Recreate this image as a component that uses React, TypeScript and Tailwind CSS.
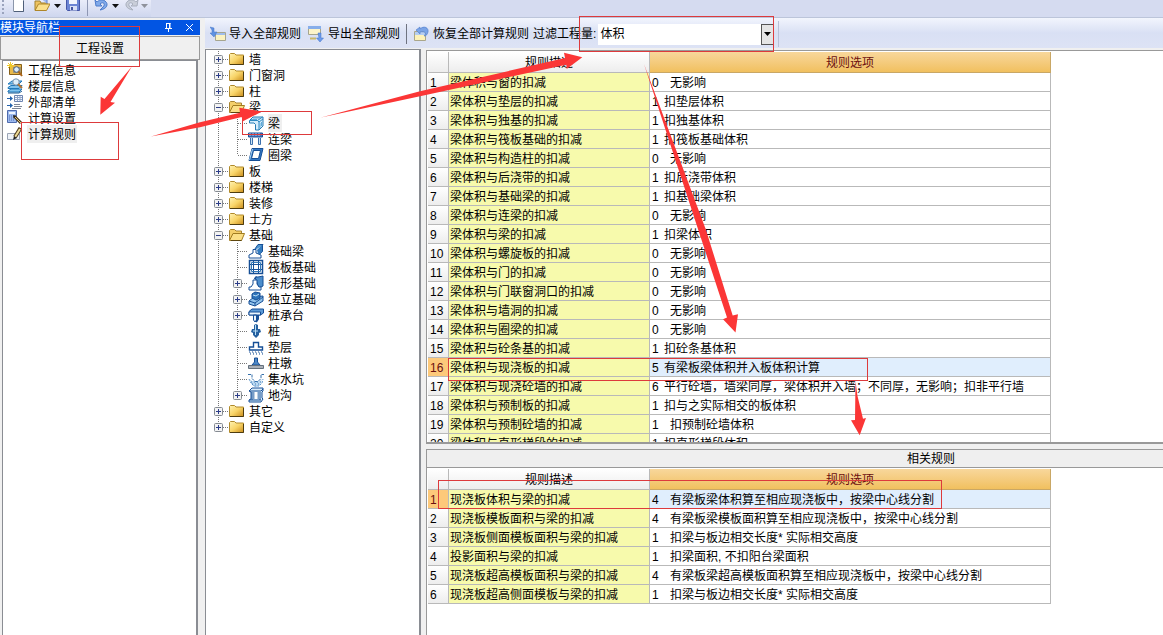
import React from "react";

type Rule = [string, string, string, boolean];

// [description, option code, option text, wide gap after the code]
const rules: Rule[] = [
  ["梁体积与窗的扣减", "0", "无影响", true],
  ["梁体积与垫层的扣减", "1", "扣垫层体积", false],
  ["梁体积与独基的扣减", "1", "扣独基体积", false],
  ["梁体积与筏板基础的扣减", "1", "扣筏板基础体积", false],
  ["梁体积与构造柱的扣减", "0", "无影响", true],
  ["梁体积与后浇带的扣减", "1", "扣后浇带体积", false],
  ["梁体积与基础梁的扣减", "1", "扣基础梁体积", false],
  ["梁体积与连梁的扣减", "0", "无影响", true],
  ["梁体积与梁的扣减", "1", "扣梁体积", false],
  ["梁体积与螺旋板的扣减", "0", "无影响", true],
  ["梁体积与门的扣减", "0", "无影响", true],
  ["梁体积与门联窗洞口的扣减", "0", "无影响", true],
  ["梁体积与墙洞的扣减", "0", "无影响", true],
  ["梁体积与圈梁的扣减", "0", "无影响", true],
  ["梁体积与砼条基的扣减", "1", "扣砼条基体积", false],
  ["梁体积与现浇板的扣减", "5", "有梁板梁体积并入板体积计算", false],
  ["梁体积与现浇砼墙的扣减", "6", "平行砼墙，墙梁同厚，梁体积并入墙；不同厚，无影响；扣非平行墙", false],
  ["梁体积与预制板的扣减", "1", "扣与之实际相交的板体积", false],
  ["梁体积与预制砼墙的扣减", "1", "扣预制砼墙体积", true],
  ["梁体积与直形梯段的扣减", "1", "扣直形梯段体积", false],
];

const related: Rule[] = [
  ["现浇板体积与梁的扣减", "4", "有梁板梁体积算至相应现浇板中，按梁中心线分割", true],
  ["现浇板模板面积与梁的扣减", "4", "有梁板梁模板面积算至相应现浇板中，按梁中心线分割", true],
  ["现浇板侧面模板面积与梁的扣减", "1", "扣梁与板边相交长度* 实际相交高度", true],
  ["投影面积与梁的扣减", "1", "扣梁面积, 不扣阳台梁面积", true],
  ["现浇板超高模板面积与梁的扣减", "4", "有梁板梁超高模板面积算至相应现浇板中，按梁中心线分割", true],
  ["现浇板超高侧面模板与梁的扣减", "1", "扣梁与板边相交长度* 实际相交高度", true],
];

function RuleTable({ rows, selected, label }: { rows: Rule[]; selected: number; label: string }) {
  return (
    <table aria-label={label} className="w-[623px] table-fixed border-separate border-spacing-0 text-left">
      <colgroup>
        <col className="w-[21px]" />
        <col className="w-[201px]" />
        <col className="w-[401px]" />
      </colgroup>
      <thead>
        <tr className="h-[21px]">
          <th className="border-r border-b border-[#b9b9b9] bg-linear-to-b from-white to-[#ededed] p-0" />
          <th className="border-r border-b border-[#b9b9b9] bg-linear-to-b from-white to-[#ededed] p-0 pt-0.5 text-center font-normal">规则描述</th>
          <th className="border-r border-b border-[#c9a765] bg-linear-to-b from-[#f8d79b] to-[#f1c05e] p-0 pt-0.5 text-center font-normal text-[#6b0f0f]">规则选项</th>
        </tr>
      </thead>
      <tbody>
        {rows.map(([desc, code, text, wide], i) => {
          const on = i + 1 === selected;
          return (
            <tr key={desc} className="h-[19px] whitespace-nowrap">
              <td
                className={
                  on
                    ? "border-r border-b border-[#b9b9b9] bg-[#fdc97a] p-0 pt-0.5 pl-0.5 text-[#6b0f0f]"
                    : "border-r border-b border-[#b9b9b9] bg-linear-to-b from-white to-[#ededed] p-0 pt-0.5 pl-0.5"
                }
              >
                {i + 1}
              </td>
              <td className="border-r border-b border-[#b9b9b9] bg-[#f7faac] p-0 pt-0.5 pl-px">{desc}</td>
              <td
                className={
                  on
                    ? "border-r border-b border-[#b9b9b9] bg-[#e0eefd] p-0 pt-0.5 pl-0.5"
                    : "border-r border-b border-[#b9b9b9] bg-white p-0 pt-0.5 pl-0.5"
                }
              >
                <div className="flex">
                  <span className={wide ? "w-[18px]" : "w-3"}>{code}</span>
                  <span>{text}</span>
                </div>
              </td>
            </tr>
          );
        })}
      </tbody>
    </table>
  );
}

function Svg({ children }: { children: React.ReactNode }) {
  return (
    <svg viewBox="0 0 16 16" className="size-4 shrink-0" aria-hidden="true">
      {children}
    </svg>
  );
}

const Folder = () => (
  <Svg>
    <defs>
      <linearGradient id="fold" x1="0" y1="0" x2="1" y2="1">
        <stop offset="0" stopColor="#fff3b4" />
        <stop offset="0.5" stopColor="#f8d468" />
        <stop offset="1" stopColor="#c98c1c" />
      </linearGradient>
    </defs>
    <path d="M.5 13.5V3.5l1-1h4l1.5 1.5h7.5v9.5z" fill="url(#fold)" stroke="#b08a2c" />
    <path d="M1 13.5h13.5V5" fill="none" stroke="#4d3c10" />
  </Svg>
);

const OpenFolder = () => (
  <Svg>
    <path d="M.5 13V3.5l1-1h4L7 4h5.500v3" fill="#f4cf6a" stroke="#a88431" />
    <path d="M.5 13.500L4 6.500h11.500L12.500 13.500z" fill="#fbdf86" stroke="#a17c20" />
    <path d="M2 13.500h10.500" stroke="#5d460e" />
  </Svg>
);

const B = "#164f96";
const L = "#a9d3f3";

const icons: Record<string, React.ReactNode> = {
  beam: (
    <Svg>
      <path d="M1.500 5.500L5 2h10v9l-4 4H7.500V9.500L6 8H1.500z" fill="#d4ecfb" stroke="#247cb5" />
      <path d="M2 5.500h7.500L14.500 2M11 15V7l-1.500-1.500M11 7l4-3" fill="none" stroke="#2e89c0" />
      <path d="M3 4.500h6M5 3h7M12 8v5M13.500 7v4" stroke="#5fabda" />
    </Svg>
  ),
  link: (
    <Svg>
      <path d="M.5 2h14v4H.5z" fill="#5275bd" stroke={B} />
      <path d="M2.500 7v6.500h2V7M10.500 7v6.500h2V7M1 4h13" fill="#c8e4f8" stroke="#3c70ad" />
      <path d="M2 2v3M5 2v3M8 2v3M11 2v3" stroke="#a9c9ef" />
    </Svg>
  ),
  ring: (
    <Svg>
      <path d="M4 1.500h11l-3 12H1z" fill="#3177c5" stroke={B} />
      <path d="M5.500 3.500h7l-2 8h-7z" fill="#fff" stroke={B} />
      <path d="M1.500 13L4.500 2" stroke={L} />
    </Svg>
  ),
  fbeam: (
    <Svg>
      <path d="M5.500 8L10 1.500h5L10.500 8v4l4-3.500v-6" fill="#4d94d0" stroke={B} />
      <path d="M1 15v-3l4-2V6.500h3V10l5 2v3z" fill="#fff" stroke={B} />
      <path d="M9 7l5-5v7l-4 2z" fill="#347cc0" />
    </Svg>
  ),
  raft: (
    <Svg>
      <path d="M1.500 1.500h13v13h-13z" fill="#fff" stroke={B} strokeWidth="1.500" />
      <path d="M5.500 1v14M10.500 1v14M1 5.500h14M1 10.500h14" stroke={B} />
      <path d="M3.500 3.500h9v9h-9z" fill="none" stroke="#3278b6" />
    </Svg>
  ),
  strip: (
    <Svg>
      <path d="M7 2h3l5-1v10l-4 2L9 8z" fill="#4b8dcc" stroke={B} />
      <path d="M1 15v-3h2l2-3V5h4v4l2 3h2v3z" fill="#fff" stroke={B} />
      <path d="M6 4l3-2.500" stroke={B} />
    </Svg>
  ),
  pad: (
    <Svg>
      <path d="M1 10l5-4 9-1v5l-8 5-6-2z" fill="#92c3eb" stroke={B} />
      <path d="M1 10l6 2 8-6M7 12v3" fill="none" stroke={B} />
      <path d="M4 3l3-2 5 1v5L8 9 4 7z" fill="#2e73b9" stroke={B} />
      <path d="M5 4l3 1 3-2" fill="none" stroke="#bfe0f7" />
    </Svg>
  ),
  cap: (
    <Svg>
      <path d="M1 4.500L4 2h11.500v4l-3 2H1z" fill="#5c9bd6" stroke={B} />
      <path d="M1 5h11.500v3H1zM5.500 8h3v5L7 15l-1.500-2z" fill="#eaf6fe" stroke={B} />
      <path d="M10 8v4l-2 3" fill="none" stroke={B} strokeWidth="2" />
    </Svg>
  ),
  pile: (
    <Svg>
      <path d="M6 2l2-1 2 1v4h2l1 3-2 1v2l-3 3-3-3v-2l-2-1 1-3h2z" fill="#235f9f" />
      <path d="M7.500 2v10M5 8h5" stroke="#b9def5" />
    </Svg>
  ),
  cushion: (
    <Svg>
      <path d="M5.500 3.500h5V8h4v3h-13V8h4z" fill="#fff" stroke={B} strokeWidth="1.400" />
      <path d="M1 13h14M2 15h13" stroke={B} strokeDasharray="1 2" />
      <path d="M2 14h13" stroke="#5580ae" strokeDasharray="1 2" />
    </Svg>
  ),
  pier: (
    <Svg>
      <path d="M6.500 3h3v4l2.500 3H4l2.500-3z" fill="#4d87c6" stroke={B} />
      <path d="M.5 10.500h15v3H.5z" fill="#aab0b8" stroke="#65717d" />
    </Svg>
  ),
  sump: (
    <Svg>
      <path d="M2 8l2 2h8l2-2-2 6-4 2-4-2z" fill="#bcd9f1" />
      <path d="M0 3.500h4v4l3 3h3l3-3v-4h3" fill="none" stroke="#336fab" strokeDasharray="3 1" />
      <path d="M1 8l2 4 3 3h5l3-3 1-4" fill="none" stroke="#5b95cb" strokeDasharray="2 1" />
      <path d="M3 11h11M4 13h9" stroke="#4780b8" strokeDasharray="1 2" />
    </Svg>
  ),
  trench: (
    <Svg>
      <path d="M1 4l3-3h11v3l-1 1v6l1 1-2 3H1v-2l2-1V5z" fill="#d7ebf9" stroke={B} />
      <path d="M1 4h12l2-2M4 5v8M6 5v7M10 5v7M12 5v8M1 13h12" fill="none" stroke={B} />
      <path d="M6.500 5h3v7h-3z" fill="#fff" />
    </Svg>
  ),
};

function Branch({ box, line, last }: { box?: "+" | "-"; line?: boolean; last?: boolean }) {
  return (
    <svg viewBox="0 0 19 16" className="h-4 w-[19px] shrink-0" aria-hidden="true">
      <path d={last ? "M9.500 0v8" : "M9.500 0v16"} stroke="#777" strokeDasharray="1 1" />
      {!line && <path d="M10 8.500h9" stroke="#777" strokeDasharray="1 1" />}
      {box && (
        <>
          <rect x="5.500" y="4.500" width="8" height="8" rx="1" fill="#f3f3f3" stroke="#858b92" />
          <path d={box === "+" ? "M7 8.500h5M9.500 6v5" : "M7 8.500h5"} stroke="#2b3c88" />
        </>
      )}
    </svg>
  );
}

type Node = { t: string; box?: "+" | "-"; icon?: string; last?: boolean; on?: boolean };
const nodes: Node[] = [
  { t: "墙", box: "+" },
  { t: "门窗洞", box: "+" },
  { t: "柱", box: "+" },
  { t: "梁", box: "-" },
  { t: "梁", icon: "beam", on: true },
  { t: "连梁", icon: "link" },
  { t: "圈梁", icon: "ring", last: true },
  { t: "板", box: "+" },
  { t: "楼梯", box: "+" },
  { t: "装修", box: "+" },
  { t: "土方", box: "+" },
  { t: "基础", box: "-" },
  { t: "基础梁", icon: "fbeam" },
  { t: "筏板基础", icon: "raft" },
  { t: "条形基础", icon: "strip", box: "+" },
  { t: "独立基础", icon: "pad", box: "+" },
  { t: "桩承台", icon: "cap", box: "+" },
  { t: "桩", icon: "pile" },
  { t: "垫层", icon: "cushion" },
  { t: "柱墩", icon: "pier" },
  { t: "集水坑", icon: "sump" },
  { t: "地沟", icon: "trench", box: "+", last: true },
  { t: "其它", box: "+" },
  { t: "自定义", box: "+", last: true },
];

function Tree() {
  return (
    <ul className="w-[216px] shrink-0 overflow-hidden border-t border-r-2 border-l border-[#8a8d93] bg-white pt-px pl-[3px]">
      {nodes.map((n, i) => (
        <li key={i} className="flex h-4 items-center">
          {n.icon ? (
            <>
              <Branch line />
              <Branch box={n.box} last={n.last} />
            </>
          ) : (
            <Branch box={n.box} last={n.last} />
          )}
          <button type="button" className="flex h-4 items-center gap-1 pl-px">
            {n.icon ? icons[n.icon] : n.box === "-" ? <OpenFolder /> : <Folder />}
            <span className={n.on ? "bg-[#efefef] pt-0.5 pr-0.5" : "pt-0.5 pr-0.5"}>{n.t}</span>
          </button>
        </li>
      ))}
    </ul>
  );
}

const Caret = ({ gray }: { gray?: boolean }) => (
  <svg viewBox="0 0 7 4" className="mt-[3px] h-1 w-[7px] shrink-0" aria-hidden="true">
    <path d="M0 0h7L3.500 4z" fill={gray ? "#8f929b" : "#111"} />
  </svg>
);

function TopBar() {
  return (
    <header className="flex h-[18px] shrink-0 overflow-hidden border-b border-[#bcc5da] bg-[#d5dbf0]">
      <div className="flex w-[151px] items-start bg-linear-to-b from-[#e9ecf9] to-[#ced6ee] pl-0.5">
        <svg viewBox="0 0 3 16" className="h-4 w-[3px]" aria-hidden="true">
          <path d="M1 0v16" stroke="#9aa3bd" strokeWidth="2" strokeDasharray="2 2" />
        </svg>
        <button type="button" aria-label="新建" className="-mt-1 ml-[5px]">
          <Svg>
            <path d="M3.500.5h7l3 3v12h-10z" fill="#fff" stroke="#8b96aa" />
            <path d="M4 15.500h9.500V5" fill="none" stroke="#4f5f79" />
          </Svg>
        </button>
        <button type="button" aria-label="打开" className="-mt-1 ml-2 flex items-center">
          <Svg>
            <path d="M1 14V5h5l1 2h6v3" fill="#eec361" stroke="#a1822f" />
            <path d="M9 4l4-3v7" fill="#9fbaf0" stroke="#6482ca" />
            <path d="M1 14.500L4.500 8H16l-3.500 6.500z" fill="#fbe08b" stroke="#af8629" />
          </Svg>
          <span className="ml-1"><Caret /></span>
        </button>
        <button type="button" aria-label="保存" className="-mt-1 ml-1">
          <Svg>
            <path d="M1.500 1.500h13v13h-12l-1-1z" fill="#6c85d4" stroke="#4556a8" />
            <path d="M4 1.500h8V8H4z" fill="#f2f5fe" />
            <path d="M5 10h7v4.500H5z" fill="#d9e0f6" />
            <path d="M6 11h2v3H6z" fill="#43539f" />
          </Svg>
        </button>
        <span className="ml-[6px] h-4 w-px bg-[#8e97b3]" />
        <button type="button" aria-label="撤销" className="-mt-1 ml-1.5 flex items-center">
          <Svg>
            <path d="M1 4l1 6h6L6 8c3-3 6 0 3 3l-3 3c7-1 9-6 5-9-3-2-6-1-8 1z" fill="#80a9e9" stroke="#4c7bcb" />
          </Svg>
          <span className="ml-0.5"><Caret /></span>
        </button>
        <button type="button" aria-label="重做" className="-mt-1 ml-1 flex items-center">
          <Svg>
            <path d="M15 4l-1 6H8l2-2c-3-3-6 0-3 3l3 3C3 13 1 8 5 5c3-2 6-1 8 1z" fill="#c9ced9" stroke="#a8afbd" />
          </Svg>
          <span className="ml-0.5"><Caret gray /></span>
        </button>
      </div>
    </header>
  );
}

const navItems: { t: string; icon: React.ReactNode; on?: boolean }[] = [
  {
    t: "工程信息",
    icon: (
      <Svg>
        <path d="M2.500 3.500h4l1-1h7v10h-12z" fill="#e9b94a" stroke="#87601a" />
        <path d="M6 5h8v6H6z" fill="#a59670" />
        <circle cx="9.500" cy="7.500" r="2.800" fill="#dcecf8" stroke="#4b5f79" />
        <path d="M11.500 9.500L15 14" stroke="#ad6419" strokeWidth="2" />
        <path d="M3.500 0v7M0 3.500h7M1 1l5 5M6 1L1 6" stroke="#efc929" />
      </Svg>
    ),
  },
  {
    t: "楼层信息",
    icon: (
      <Svg>
        <path d="M1 6l4-3h10l-3 3zM1 9.500l3-2h11l-3 3H1zM1 13l3-2h11l-3 3H1z" fill="#7fc2ee" stroke="#2178b9" />
        <path d="M1 15h11l3-2" fill="none" stroke="#155894" />
        <circle cx="9" cy="4" r="3.200" fill="#dceefb" stroke="#7e95ad" />
        <path d="M11 6l4 4" stroke="#ad733a" strokeWidth="2" />
      </Svg>
    ),
  },
  {
    t: "外部清单",
    icon: (
      <Svg>
        <path d="M7.500 1.500h8v6h-8z" fill="#f5f9ff" stroke="#6e85b1" />
        <path d="M8 3.500h7M8 5.500h7M10.500 2v5M13 2v5" stroke="#8fa4c8" />
        <path d="M0 4.500h5M0 11.500h5" stroke="#2362ac" />
        <path d="M3 2l3 2.500L3 7zM3 9l3 2.500L3 14z" fill="#2362ac" />
        <path d="M7 10.500h6M7 12.500h8M5 14.500h9" stroke="#7e8797" />
      </Svg>
    ),
  },
  {
    t: "计算设置",
    icon: (
      <Svg>
        <path d="M.5.500h9v12h-9z" fill="#9cb9ed" stroke="#4e6bae" />
        <path d="M2 2h6v2H2z" fill="#edf4ff" />
        <path d="M2 6h6M2 8h6M2 10h6" stroke="#506eb7" strokeDasharray="1 1" />
        <path d="M7 6l7 7" stroke="#4b3b22" strokeWidth="3" />
        <path d="M8 7l6 6" stroke="#e8c978" />
        <path d="M6 5l1 3 2-2z" fill="#222" />
      </Svg>
    ),
  },
  {
    t: "计算规则",
    on: true,
    icon: (
      <Svg>
        <path d="M.5 7.500h12v6H.5z" fill="#eef2f8" stroke="#9aa4b5" />
        <path d="M13.500 2L8 11" stroke="#4a371a" strokeWidth="4" />
        <path d="M13 3L8 11" stroke="#eedb97" strokeWidth="2" />
        <path d="M6 14l1-4 3 2z" fill="#222" />
      </Svg>
    ),
  },
];

function NavPanel() {
  return (
    <aside className="flex w-[200px] shrink-0 flex-col pt-0.5">
      <div className="flex h-[15px] items-center bg-[#0255e3] pr-1.5 text-white">
        <h2 className="flex-1 leading-4">模块导航栏</h2>
        <button type="button" aria-label="固定" className="mr-3">
          <svg viewBox="0 0 9 9" className="size-[9px]" aria-hidden="true">
            <path d="M2.500 0v5M6 0v5M2 .5h4.500M1 5.500h7M4.500 6v3M5.500 0v5" fill="none" stroke="#fff" />
          </svg>
        </button>
        <button type="button" aria-label="关闭">
          <svg viewBox="0 0 9 9" className="size-[9px]" aria-hidden="true">
            <path d="M1 1l7 7M8 1L1 8" stroke="#fff" />
          </svg>
        </button>
      </div>
      <button type="button" className="mt-px h-6 border border-[#999] bg-[#f0f0f0] pt-0.5 text-center">
        工程设置
      </button>
      <ul className="mr-0.5 ml-0.5 flex-1 border-t border-r-2 border-l border-[#8a8d93] bg-white pt-px pl-1">
        {navItems.map((n) => (
          <li key={n.t}>
            <button type="button" className="flex h-4 items-center gap-1">
              {n.icon}
              <span className={n.on ? "bg-[#efefef] px-px pt-0.5" : "px-px pt-0.5"}>{n.t}</span>
            </button>
          </li>
        ))}
      </ul>
    </aside>
  );
}

function Toolbar() {
  return (
    <div className="flex h-[30px] shrink-0 items-center overflow-hidden bg-linear-to-b from-[#f2f5fd] via-[#d9e0f4] to-[#dde3f5] pt-0.5 pl-[5px] whitespace-nowrap">
      <button type="button" className="flex items-center gap-[3px]">
        <Svg>
          <path d="M5.500 6.500h10v8h-10z" fill="#fbf2c0" stroke="#a6a58e" />
          <path d="M6 7h9v2H6z" fill="#9fbdec" />
          <path d="M0 1l4 1v4h3L4 11 0 7h2V4z" fill="#5f92e2" stroke="#4676c8" strokeWidth=".5" />
        </Svg>
        导入全部规则
      </button>
      <button type="button" className="ml-[7px] flex items-center gap-1">
        <Svg>
          <path d="M.5.500h12v8H.500z" fill="#fdf4c9" stroke="#a6a58e" />
          <path d="M0 0h13v3H0z" fill="#87aeea" />
          <path d="M2 12.500h6" stroke="#c9b76b" strokeWidth="2" />
          <path d="M10 7h3v5h2.500L12 16 8.500 12H11z" fill="#6e9bea" stroke="#3f72c9" strokeWidth=".5" />
        </Svg>
        导出全部规则
      </button>
      <span className="ml-1.5 h-5 w-px bg-[#6f7380]" />
      <button type="button" className="ml-1.5 flex items-center gap-1">
        <Svg>
          <path d="M1.500 5.500h11v9h-11z" fill="#fdf2b8" stroke="#aaa68a" />
          <path d="M2 6h10v3H2z" fill="#b5cdf1" />
          <path d="M3 4l4-3v2c4-4 9-1 8 3-1 3-2 4-4 4 3-3 1-5-4-4v2z" fill="#7ba4e6" stroke="#4c7bcb" strokeWidth=".6" />
        </Svg>
        恢复全部计算规则
      </button>
      <label htmlFor="qty" className="ml-1">过滤工程量:</label>
      <div className="ml-0.5 flex h-[21px] w-[176px] bg-white">
        <select id="qty" className="min-w-0 flex-1 appearance-none bg-white pl-0.5 outline-none">
          <option>体积</option>
        </select>
        <button type="button" aria-label="展开" className="flex w-[13px] items-center justify-center border border-[#555] bg-[#e5e5e5]">
          <svg viewBox="0 0 7 4" className="h-1 w-[7px]" aria-hidden="true">
            <path d="M0 0h7L3.500 4z" fill="#000" />
          </svg>
        </button>
      </div>
      <span className="ml-1 h-[26px] w-px bg-[#b9c1d8]" />
    </div>
  );
}

function Annotations() {
  return (
    <svg viewBox="0 0 1163 635" width="1163" height="635" className="pointer-events-none absolute top-0 left-0" aria-hidden="true">
      <g fill="none" stroke="#dd3a3c">
        <rect x="59.500" y="26.500" width="80" height="40" />
        <rect x="21.500" y="122.500" width="97" height="37" />
        <rect x="242.500" y="111.500" width="69" height="23" />
        <rect x="579.500" y="16.500" width="194" height="35" />
        <rect x="448.500" y="358.500" width="419" height="22" />
        <rect x="438.500" y="480.500" width="503" height="28" />
      </g>
      <g fill="#fb3636">
        <path d="M131.700 66.700L110.500 102l4.500.7L100.300 114.700 100.700 96.700 104.500 99z" />
        <path d="M151 136.500L200 122.300 240 112.700 239.300 107.700 262 111.500 243 121.300 241.600 117 200 127.300z" />
        <path d="M321 117.500L420 91.300 565 58 564 52.700 582.300 57.300 566.700 69 566.300 64.700 420 96.300z" />
        <path d="M644 64L706 230 732.700 315.500 738 314.300 735.500 332.500 723 319.300 727 317.500 698.300 230z" />
        <path d="M855.500 381L857.500 396 863 418.700 866 418 859.700 435.300 851 420.300 855 420z" />
      </g>
    </svg>
  );
}

export default function App() {
  return (
    <div className="relative flex h-screen flex-col overflow-hidden bg-[#f0f0f0] font-['Liberation_Sans','Noto_Sans_CJK_SC',sans-serif] text-xs leading-4 text-black">
      <TopBar />
      <div className="flex min-h-0 flex-1 gap-[5px]">
        <NavPanel />
        <main className="flex min-w-0 flex-1 flex-col">
          <Toolbar />
          <div className="mt-px flex min-h-0 flex-1 gap-[5px]">
            <Tree />
            <div className="grid min-w-0 flex-1 grid-rows-[minmax(0,35fr)_minmax(0,17fr)] pt-px">
              <section className="overflow-hidden border-t border-b-2 border-l border-[#999] bg-white pt-px pl-px">
                <RuleTable rows={rules} selected={16} label="计算规则" />
              </section>
              <section className="flex flex-col overflow-hidden pt-[5px]">
                <h3 className="h-[19px] shrink-0 border border-r-0 border-[#999] bg-[#efefef] pl-[480px] leading-[18px]">相关规则</h3>
                <div className="min-h-0 flex-1 border-l border-[#999] bg-white pt-px pl-px">
                  <RuleTable rows={related} selected={1} label="相关规则" />
                </div>
              </section>
            </div>
          </div>
        </main>
      </div>
      <Annotations />
    </div>
  );
}
